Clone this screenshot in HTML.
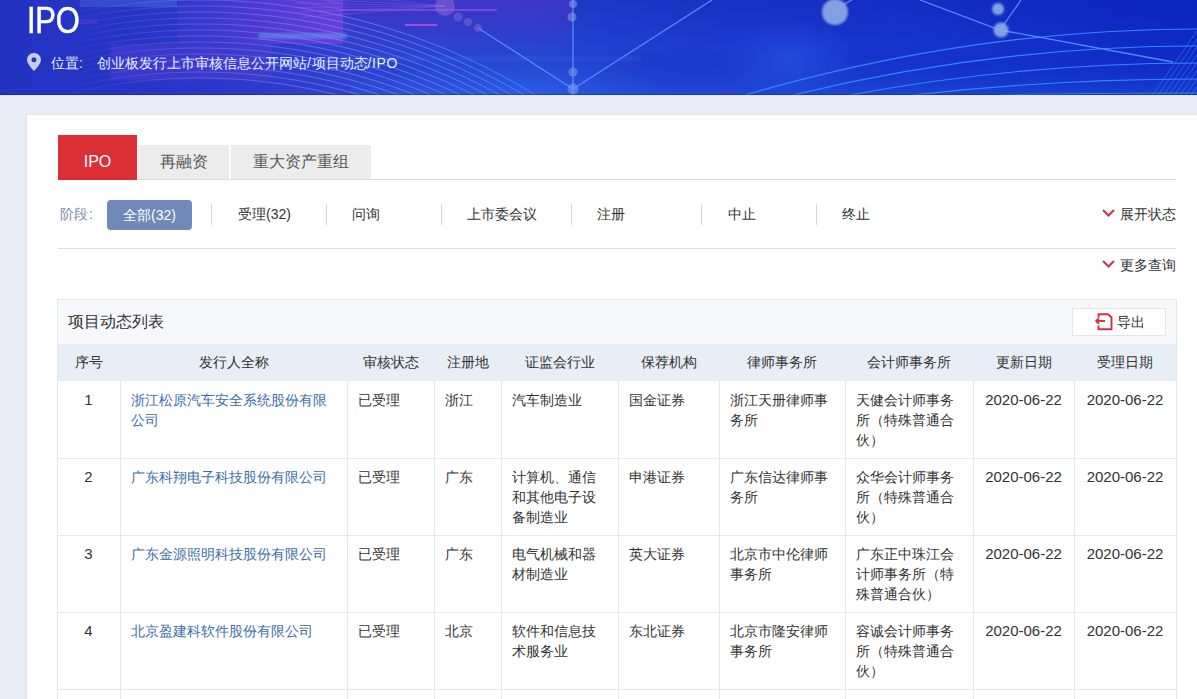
<!DOCTYPE html>
<html><head><meta charset="utf-8">
<style>
*{margin:0;padding:0;box-sizing:border-box}
html,body{width:1197px;height:699px;overflow:hidden;background:#e9ecf4;font-family:"Liberation Sans",sans-serif;color:#333;position:relative}
.a{position:absolute;white-space:nowrap}
.banner{position:absolute;left:0;top:0;width:1197px;height:95px;overflow:hidden;background:#2536cc}
.banner svg{position:absolute;left:0;top:0}
.ipo{position:absolute;left:27px;top:1px;color:#fff;font-size:36px;line-height:40px;transform:scaleX(0.86);transform-origin:0 0;letter-spacing:-0.3px;-webkit-text-stroke:0.5px #fff}
.loc{position:absolute;left:51px;top:54px;color:#e6eeff;font-size:14px;line-height:18px;white-space:nowrap}
.card{position:absolute;left:27px;top:115px;width:1180px;height:600px;background:#fff;box-shadow:0 0 3px rgba(0,0,0,0.07)}
.tab{position:absolute;top:145px;height:34px;background:#ececec;color:#585858;font-size:16px;line-height:34px;text-align:center}
.tabred{position:absolute;left:58px;top:135px;width:79px;height:45px;background:#dc2f35;color:#fff;font-size:16px;line-height:54px;text-align:center}
.hline{position:absolute;left:58px;width:1118px;height:1px;background:#dcdcdc}
.stage{position:absolute;top:205px;font-size:14px;line-height:18px;color:#333;white-space:nowrap}
.sep{position:absolute;top:204px;width:1px;height:21px;background:#d8d8d8}
.btn{position:absolute;left:107px;top:200px;width:85px;height:30px;border-radius:4px;background:#7089b8;color:#fff;font-size:14px;line-height:30px;text-align:center}
.ttl{position:absolute;left:57px;top:299px;width:1120px;height:45px;border-top:1px solid #e6e8ec;background:#f6f8fb}
.ttltxt{left:68px;top:312px;font-size:16px;line-height:20px;color:#333}
.exp{position:absolute;left:1072px;top:308px;width:94px;height:28px;background:#fff;border:1px solid #e4e4e4}
.hdr{position:absolute;left:57px;top:344px;width:1120px;height:37px;background:#e7eef6}
.th{top:344px;height:37px;line-height:37px;text-align:center;font-size:14px;color:#333}
.hl{position:absolute;left:57px;width:1120px;height:1px;background:#e8e8e8}
.vl{position:absolute;width:1px;background:#e8e8e8}
.td{font-size:14px;line-height:20px;color:#333}
.td.c{text-align:center;font-size:15px}
.lnk{color:#3b6ea8}

</style></head><body>
<div class="banner">
<svg width="1197" height="95" viewBox="0 0 1197 95"><defs><linearGradient id="bg" x1="0" y1="0" x2="1197" y2="0" gradientUnits="userSpaceOnUse"><stop offset="0" stop-color="#2233c2"/><stop offset="0.1" stop-color="#2634c6"/><stop offset="0.2" stop-color="#2e38ca"/><stop offset="0.28" stop-color="#3240ce"/><stop offset="0.36" stop-color="#2c44d2"/><stop offset="0.46" stop-color="#2444d2"/><stop offset="0.56" stop-color="#1e3cce"/><stop offset="0.75" stop-color="#1634cc"/><stop offset="1" stop-color="#0e2ac4"/></linearGradient><linearGradient id="vg" x1="0" y1="0" x2="0" y2="95" gradientUnits="userSpaceOnUse"><stop offset="0" stop-color="#0a1aa0" stop-opacity="0.25"/><stop offset="0.5" stop-color="#0a1aa0" stop-opacity="0"/><stop offset="1" stop-color="#2a6af0" stop-opacity="0.3"/></linearGradient><linearGradient id="pur" x1="0" y1="0" x2="1" y2="0"><stop offset="0" stop-color="#6a3cd8" stop-opacity="0.15"/><stop offset="0.5" stop-color="#7038d8" stop-opacity="0.5"/><stop offset="1" stop-color="#7a3cdc" stop-opacity="0.8"/></linearGradient><radialGradient id="glow"><stop offset="0" stop-color="#3a78f8" stop-opacity="0.5"/><stop offset="1" stop-color="#3a78f8" stop-opacity="0"/></radialGradient><linearGradient id="lg" x1="60" y1="0" x2="560" y2="0" gradientUnits="userSpaceOnUse"><stop offset="0" stop-color="#7a9af8" stop-opacity="0"/><stop offset="0.25" stop-color="#7a9af8" stop-opacity="0.45"/><stop offset="0.6" stop-color="#6a9cff" stop-opacity="0.8"/><stop offset="1" stop-color="#4a90ff" stop-opacity="1"/></linearGradient><filter id="bl"><feGaussianBlur stdDeviation="1.2"/></filter><filter id="bl2"><feGaussianBlur stdDeviation="0.7"/></filter></defs><rect width="1197" height="95" fill="url(#bg)"/><rect x="350" width="847" height="95" fill="url(#vg)"/><ellipse cx="520" cy="90" rx="140" ry="40" fill="url(#glow)" opacity="0.6"/><ellipse cx="790" cy="60" rx="70" ry="40" fill="url(#glow)" opacity="0.55"/><linearGradient id="vio" x1="0" y1="0" x2="0" y2="1"><stop offset="0" stop-color="#4a34c8" stop-opacity="0.7"/><stop offset="1" stop-color="#4a34c8" stop-opacity="0"/></linearGradient><rect x="343" y="0" width="230" height="55" fill="url(#vio)"/><rect x="178" y="0" width="165" height="44" fill="url(#pur)"/><rect x="110" y="44" width="162" height="36" fill="#7040d8" opacity="0.28" filter="url(#bl)"/><rect x="80" y="0" width="97" height="7" fill="#4a6ae0" opacity="0.45"/><rect x="80" y="19" width="17" height="5" fill="#7a40d8" opacity="0.3"/><rect x="258" y="33" width="89" height="6" rx="3" fill="#6aa0f0" opacity="0.5" filter="url(#bl)"/><rect x="340" y="56" width="300" height="5" fill="#4a80f0" opacity="0.15" filter="url(#bl)"/><g fill="none" stroke="#9a7ae8" stroke-opacity="0.25" stroke-width="1"><path d="M445,6 L297.3,-1.8"/><path d="M445,6 L295.4,2.9"/><path d="M445,6 L295.1,7.6"/><path d="M445,6 L296.5,12.3"/><path d="M445,6 L300.1,17.6"/><path d="M445,6 L304.0,-9.4"/></g><rect x="340" y="9" width="157" height="2" fill="#9050e0" opacity="0.7"/><rect x="405" y="24" width="32" height="2" fill="#c050e0" opacity="0.8"/><g fill="none" stroke="url(#lg)" stroke-width="1"><path d="M60.0,-2.9 L70.0,-5.0 L80.0,-7.0 L90.0,-8.7 L100.0,-10.4 L110.0,-11.8 L120.0,-13.1 L130.0,-14.3 L140.0,-15.3 L150.0,-16.1 L160.0,-16.8 L170.0,-17.3 L180.0,-17.7 L190.0,-17.9 L200.0,-18.0 L210.0,-17.9 L220.0,-17.7 L230.0,-17.3 L240.0,-16.8 L250.0,-16.1 L260.0,-15.3 L270.0,-14.3 L280.0,-13.1 L290.0,-11.8 L300.0,-10.4 L310.0,-8.7 L320.0,-7.0 L330.0,-5.0 L340.0,-2.9" stroke-opacity="0.35"/><path d="M60.0,3.2 L70.0,1.1 L80.0,-0.9 L90.0,-2.7 L100.0,-4.3 L110.0,-5.8 L120.0,-7.1 L130.0,-8.2 L140.0,-9.2 L150.0,-10.1 L160.0,-10.8 L170.0,-11.3 L180.0,-11.7 L190.0,-11.9 L200.0,-12.0 L210.0,-11.9 L220.0,-11.7 L230.0,-11.3 L240.0,-10.8 L250.0,-10.1 L260.0,-9.2 L270.0,-8.2 L280.0,-7.1 L290.0,-5.8 L300.0,-4.3 L310.0,-2.7 L320.0,-0.9 L330.0,1.1 L340.0,3.2" stroke-opacity="0.35"/><path d="M60.0,9.4 L70.0,7.2 L80.0,5.2 L90.0,3.4 L100.0,1.8 L110.0,0.3 L120.0,-1.0 L130.0,-2.2 L140.0,-3.2 L150.0,-4.1 L160.0,-4.8 L170.0,-5.3 L180.0,-5.7 L190.0,-5.9 L200.0,-6.0 L210.0,-5.9 L220.0,-5.7 L230.0,-5.3 L240.0,-4.8 L250.0,-4.1 L260.0,-3.2 L270.0,-2.2 L280.0,-1.0 L290.0,0.3 L300.0,1.8 L310.0,3.4 L320.0,5.2 L330.0,7.2 L340.0,9.4" stroke-opacity="0.35"/><path d="M60.0,15.5 L70.0,13.3 L80.0,11.4 L90.0,9.5 L100.0,7.9 L110.0,6.4 L120.0,5.0 L130.0,3.8 L140.0,2.8 L150.0,2.0 L160.0,1.3 L170.0,0.7 L180.0,0.3 L190.0,0.1 L200.0,0.0 L210.0,0.1 L220.0,0.3 L230.0,0.7 L240.0,1.3 L250.0,2.0 L260.0,2.8 L270.0,3.8 L280.0,5.0 L290.0,6.4 L300.0,7.9 L310.0,9.5 L320.0,11.4 L330.0,13.3 L340.0,15.5 L350.0,17.8 L360.0,20.3 L370.0,23.0 L380.0,25.8 L390.0,28.9 L400.0,32.1 L410.0,35.4 L420.0,39.0 L430.0,42.8 L440.0,46.7 L450.0,50.8 L460.0,55.2 L470.0,59.7 L480.0,64.5 L490.0,69.5 L500.0,74.7 L510.0,80.1 L520.0,85.7 L530.0,91.6 L540.0,97.8 L550.0,104.2" stroke-opacity="0.75"/><path d="M60.0,21.7 L70.0,19.5 L80.0,17.5 L90.0,15.6 L100.0,13.9 L110.0,12.4 L120.0,11.1 L130.0,9.9 L140.0,8.8 L150.0,8.0 L160.0,7.3 L170.0,6.7 L180.0,6.3 L190.0,6.1 L200.0,6.0 L210.0,6.1 L220.0,6.3 L230.0,6.7 L240.0,7.3 L250.0,8.0 L260.0,8.8 L270.0,9.9 L280.0,11.1 L290.0,12.4 L300.0,13.9 L310.0,15.6 L320.0,17.5 L330.0,19.5 L340.0,21.7 L350.0,24.0 L360.0,26.5 L370.0,29.2 L380.0,32.1 L390.0,35.1 L400.0,38.4 L410.0,41.8 L420.0,45.4 L430.0,49.2 L440.0,53.2 L450.0,57.4 L460.0,61.8 L470.0,66.4 L480.0,71.2 L490.0,76.2 L500.0,81.5 L510.0,87.0 L520.0,92.7 L530.0,98.7" stroke-opacity="0.75"/><path d="M60.0,27.8 L70.0,25.6 L80.0,23.6 L90.0,21.7 L100.0,20.0 L110.0,18.5 L120.0,17.1 L130.0,15.9 L140.0,14.9 L150.0,14.0 L160.0,13.3 L170.0,12.7 L180.0,12.3 L190.0,12.1 L200.0,12.0 L210.0,12.1 L220.0,12.3 L230.0,12.7 L240.0,13.3 L250.0,14.0 L260.0,14.9 L270.0,15.9 L280.0,17.1 L290.0,18.5 L300.0,20.0 L310.0,21.7 L320.0,23.6 L330.0,25.6 L340.0,27.8 L350.0,30.2 L360.0,32.7 L370.0,35.4 L380.0,38.3 L390.0,41.4 L400.0,44.7 L410.0,48.2 L420.0,51.8 L430.0,55.6 L440.0,59.7 L450.0,63.9 L460.0,68.3 L470.0,73.0 L480.0,77.9 L490.0,83.0 L500.0,88.3 L510.0,93.8 L520.0,99.6" stroke-opacity="0.75"/><path d="M60.0,34.0 L70.0,31.7 L80.0,29.7 L90.0,27.8 L100.0,26.1 L110.0,24.5 L120.0,23.2 L130.0,22.0 L140.0,20.9 L150.0,20.0 L160.0,19.3 L170.0,18.7 L180.0,18.3 L190.0,18.1 L200.0,18.0 L210.0,18.1 L220.0,18.3 L230.0,18.7 L240.0,19.3 L250.0,20.0 L260.0,20.9 L270.0,22.0 L280.0,23.2 L290.0,24.5 L300.0,26.1 L310.0,27.8 L320.0,29.7 L330.0,31.7 L340.0,34.0 L350.0,36.4 L360.0,38.9 L370.0,41.7 L380.0,44.6 L390.0,47.7 L400.0,51.0 L410.0,54.5 L420.0,58.2 L430.0,62.1 L440.0,66.2 L450.0,70.5 L460.0,74.9 L470.0,79.7 L480.0,84.6 L490.0,89.7 L500.0,95.1 L510.0,100.8" stroke-opacity="0.75"/><path d="M60.0,40.1 L70.0,37.9 L80.0,35.8 L90.0,33.9 L100.0,32.2 L110.0,30.6 L120.0,29.2 L130.0,28.0 L140.0,26.9 L150.0,26.0 L160.0,25.3 L170.0,24.7 L180.0,24.3 L190.0,24.1 L200.0,24.0 L210.0,24.1 L220.0,24.3 L230.0,24.7 L240.0,25.3 L250.0,26.0 L260.0,26.9 L270.0,28.0 L280.0,29.2 L290.0,30.6 L300.0,32.2 L310.0,33.9 L320.0,35.8 L330.0,37.9 L340.0,40.1 L350.0,42.5 L360.0,45.1 L370.0,47.9 L380.0,50.9 L390.0,54.0 L400.0,57.4 L410.0,60.9 L420.0,64.6 L430.0,68.5 L440.0,72.7 L450.0,77.0 L460.0,81.6 L470.0,86.3 L480.0,91.3 L490.0,96.5 L500.0,102.0" stroke-opacity="0.75"/><path d="M60.0,46.3 L70.0,44.0 L80.0,41.9 L90.0,40.0 L100.0,38.3 L110.0,36.7 L120.0,35.3 L130.0,34.0 L140.0,33.0 L150.0,32.1 L160.0,31.3 L170.0,30.7 L180.0,30.3 L190.0,30.1 L200.0,30.0 L210.0,30.1 L220.0,30.3 L230.0,30.7 L240.0,31.3 L250.0,32.1 L260.0,33.0 L270.0,34.0 L280.0,35.3 L290.0,36.7 L300.0,38.3 L310.0,40.0 L320.0,41.9 L330.0,44.0 L340.0,46.3 L350.0,48.7 L360.0,51.4 L370.0,54.2 L380.0,57.2 L390.0,60.3 L400.0,63.7 L410.0,67.3 L420.0,71.1 L430.0,75.0 L440.0,79.2 L450.0,83.6 L460.0,88.2 L470.0,93.0 L480.0,98.1" stroke-opacity="0.75"/><path d="M60.0,52.4 L70.0,50.2 L80.0,48.0 L90.0,46.1 L100.0,44.3 L110.0,42.7 L120.0,41.3 L130.0,40.1 L140.0,39.0 L150.0,38.1 L160.0,37.3 L170.0,36.7 L180.0,36.3 L190.0,36.1 L200.0,36.0 L210.0,36.1 L220.0,36.3 L230.0,36.7 L240.0,37.3 L250.0,38.1 L260.0,39.0 L270.0,40.1 L280.0,41.3 L290.0,42.7 L300.0,44.3 L310.0,46.1 L320.0,48.0 L330.0,50.2 L340.0,52.4 L350.0,54.9 L360.0,57.6 L370.0,60.4 L380.0,63.4 L390.0,66.7 L400.0,70.1 L410.0,73.7 L420.0,77.5 L430.0,81.5 L440.0,85.7 L450.0,90.2 L460.0,94.8 L470.0,99.7" stroke-opacity="0.75"/><path d="M60.0,58.6 L70.0,56.3 L80.0,54.2 L90.0,52.2 L100.0,50.4 L110.0,48.8 L120.0,47.4 L130.0,46.1 L140.0,45.0 L150.0,44.1 L160.0,43.3 L170.0,42.8 L180.0,42.3 L190.0,42.1 L200.0,42.0 L210.0,42.1 L220.0,42.3 L230.0,42.8 L240.0,43.3 L250.0,44.1 L260.0,45.0 L270.0,46.1 L280.0,47.4 L290.0,48.8 L300.0,50.4 L310.0,52.2 L320.0,54.2 L330.0,56.3 L340.0,58.6 L350.0,61.1 L360.0,63.8 L370.0,66.7 L380.0,69.7 L390.0,73.0 L400.0,76.4 L410.0,80.1 L420.0,83.9 L430.0,88.0 L440.0,92.3 L450.0,96.8 L460.0,101.5" stroke-opacity="0.75"/><path d="M60.0,64.8 L70.0,62.5 L80.0,60.3 L90.0,58.3 L100.0,56.5 L110.0,54.9 L120.0,53.4 L130.0,52.2 L140.0,51.0 L150.0,50.1 L160.0,49.4 L170.0,48.8 L180.0,48.3 L190.0,48.1 L200.0,48.0 L210.0,48.1 L220.0,48.3 L230.0,48.8 L240.0,49.4 L250.0,50.1 L260.0,51.0 L270.0,52.2 L280.0,53.4 L290.0,54.9 L300.0,56.5 L310.0,58.3 L320.0,60.3 L330.0,62.5 L340.0,64.8 L350.0,67.3 L360.0,70.0 L370.0,72.9 L380.0,76.0 L390.0,79.3 L400.0,82.8 L410.0,86.5 L420.0,90.4 L430.0,94.5 L440.0,98.8" stroke-opacity="0.75"/><path d="M60.0,71.0 L70.0,68.6 L80.0,66.4 L90.0,64.4 L100.0,62.6 L110.0,61.0 L120.0,59.5 L130.0,58.2 L140.0,57.1 L150.0,56.1 L160.0,55.4 L170.0,54.8 L180.0,54.3 L190.0,54.1 L200.0,54.0 L210.0,54.1 L220.0,54.3 L230.0,54.8 L240.0,55.4 L250.0,56.1 L260.0,57.1 L270.0,58.2 L280.0,59.5 L290.0,61.0 L300.0,62.6 L310.0,64.4 L320.0,66.4 L330.0,68.6 L340.0,71.0 L350.0,73.5 L360.0,76.3 L370.0,79.2 L380.0,82.3 L390.0,85.7 L400.0,89.2 L410.0,92.9 L420.0,96.9 L430.0,101.0" stroke-opacity="0.75"/><path d="M60.0,77.2 L70.0,74.8 L80.0,72.5 L90.0,70.5 L100.0,68.7 L110.0,67.0 L120.0,65.5 L130.0,64.2 L140.0,63.1 L150.0,62.2 L160.0,61.4 L170.0,60.8 L180.0,60.3 L190.0,60.1 L200.0,60.0 L210.0,60.1 L220.0,60.3 L230.0,60.8 L240.0,61.4 L250.0,62.2 L260.0,63.1 L270.0,64.2 L280.0,65.5 L290.0,67.0 L300.0,68.7 L310.0,70.5 L320.0,72.5 L330.0,74.8 L340.0,77.2 L350.0,79.7 L360.0,82.5 L370.0,85.5 L380.0,88.6 L390.0,92.0 L400.0,95.6 L410.0,99.4" stroke-opacity="0.75"/><path d="M60.0,83.3 L70.0,80.9 L80.0,78.7 L90.0,76.6 L100.0,74.8 L110.0,73.1 L120.0,71.6 L130.0,70.3 L140.0,69.1 L150.0,68.2 L160.0,67.4 L170.0,66.8 L180.0,66.3 L190.0,66.1 L200.0,66.0 L210.0,66.1 L220.0,66.3 L230.0,66.8 L240.0,67.4 L250.0,68.2 L260.0,69.1 L270.0,70.3 L280.0,71.6 L290.0,73.1 L300.0,74.8 L310.0,76.6 L320.0,78.7 L330.0,80.9 L340.0,83.3 L350.0,85.9 L360.0,88.8 L370.0,91.8 L380.0,95.0 L390.0,98.4" stroke-opacity="0.75"/><path d="M60.0,89.5 L70.0,87.1 L80.0,84.8 L90.0,82.8 L100.0,80.9 L110.0,79.2 L120.0,77.7 L130.0,76.3 L140.0,75.2 L150.0,74.2 L160.0,73.4 L170.0,72.8 L180.0,72.4 L190.0,72.1 L200.0,72.0 L210.0,72.1 L220.0,72.4 L230.0,72.8 L240.0,73.4 L250.0,74.2 L260.0,75.2 L270.0,76.3 L280.0,77.7 L290.0,79.2 L300.0,80.9 L310.0,82.8 L320.0,84.8 L330.0,87.1 L340.0,89.5 L350.0,92.2 L360.0,95.0 L370.0,98.0" stroke-opacity="0.75"/><path d="M60.0,95.7 L70.0,93.2 L80.0,91.0 L90.0,88.9 L100.0,87.0 L110.0,85.3 L120.0,83.7 L130.0,82.4 L140.0,81.2 L150.0,80.2 L160.0,79.4 L170.0,78.8 L180.0,78.4 L190.0,78.1 L200.0,78.0 L210.0,78.1 L220.0,78.4 L230.0,78.8 L240.0,79.4 L250.0,80.2 L260.0,81.2 L270.0,82.4 L280.0,83.7 L290.0,85.3 L300.0,87.0 L310.0,88.9 L320.0,91.0 L330.0,93.2 L340.0,95.7 L350.0,98.4" stroke-opacity="0.75"/><path d="M60.0,101.9" stroke-opacity="0.75"/><path d="M60.0,108.1" stroke-opacity="0.75"/><path d="M60.0,114.3" stroke-opacity="0.75"/></g><g fill="none" stroke="#3d8cff" stroke-opacity="0.9" stroke-width="1.2"><path d="M745,95 Q971.0,29 1197,29" /><path d="M793,95 Q995.0,46 1197,46" /><path d="M850,95 Q1023.5,63 1197,63" /><path d="M913,95 Q1055.0,79 1197,79" /><path d="M1000,95 Q1098.5,93 1197,93" /></g><g fill="none" stroke="#3a8aff" stroke-opacity="0.6" stroke-width="0.9"><path d="M1152.0,96 L1200.4,26"/><path d="M1157.5,96 L1205.9,26"/><path d="M1163.0,96 L1211.4,26"/><path d="M1168.5,96 L1216.9,26"/><path d="M1174.0,96 L1222.4,26"/><path d="M1179.5,96 L1227.9,26"/><path d="M1185.0,96 L1233.4,26"/><path d="M1190.5,96 L1238.9,26"/><path d="M1196.0,96 L1244.4,26"/></g><g fill="none" stroke="#5e8cff" stroke-opacity="0.95" stroke-width="1.3"><path d="M573,0V95"/><path d="M478,28L573,89L712,0"/><path d="M843,5L855,-2"/><path d="M920,0L1000,30L1173,62"/><path d="M1000,30L1021,0"/></g><g fill="#7c98e8" fill-opacity="0.6" filter="url(#bl2)"><circle cx="573" cy="4" r="4"/><circle cx="572" cy="17" r="4.5"/><circle cx="573" cy="72" r="4.5"/><circle cx="573" cy="89" r="5.5"/></g><g fill="#90ace8" fill-opacity="0.9" filter="url(#bl)"><circle cx="835" cy="12" r="13"/><circle cx="998" cy="9" r="6"/><circle cx="1001" cy="30" r="7.5"/></g><g fill="#a070d8" fill-opacity="0.45" filter="url(#bl2)"><circle cx="445" cy="6" r="10"/></g><g fill="#8070d0" fill-opacity="0.45" filter="url(#bl2)"><circle cx="458" cy="17" r="4.5"/><circle cx="468" cy="22" r="4"/><circle cx="478" cy="28" r="4"/></g><rect y="94" width="1197" height="1" fill="#0a1880" opacity="0.35"/></svg>
<div class="ipo">IPO</div>
<svg style="left:27px;top:53px" width="14" height="18" viewBox="0 0 14 18"><path d="M7 0C3.1 0 0 3 0 6.8 0 11.5 7 18 7 18S14 11.5 14 6.8C14 3 10.9 0 7 0zM7 9.3A2.5 2.5 0 1 1 7 4.3 2.5 2.5 0 0 1 7 9.3z" fill="#c9cde2"/></svg>
<div class="loc">位置:</div><div class="loc" style="left:97px">创业板发行上市审核信息公开网站<span style="letter-spacing:0.6px">/</span>项目动态<span style="letter-spacing:0.6px">/IPO</span></div>
</div>
<div class="card"></div>
<div class="hline" style="top:179px"></div>
<div class="tabred">IPO</div>
<div class="tab" style="left:138px;width:91px">再融资</div>
<div class="tab" style="left:231px;width:140px">重大资产重组</div>
<div class="stage" style="left:60px;color:#7b8ab2">阶段<span style="margin-left:1px">:</span></div>
<div class="btn">全部(32)</div>
<div class="sep" style="left:211px"></div>
<div class="stage" style="left:238px">受理(32)</div>
<div class="sep" style="left:326px"></div>
<div class="stage" style="left:352px">问询</div>
<div class="sep" style="left:441px"></div>
<div class="stage" style="left:467px">上市委会议</div>
<div class="sep" style="left:571px"></div>
<div class="stage" style="left:597px">注册</div>
<div class="sep" style="left:701px"></div>
<div class="stage" style="left:728px">中止</div>
<div class="sep" style="left:816px"></div>
<div class="stage" style="left:842px">终止</div>
<svg class="a" style="left:1102px;top:209px" width="13" height="8" viewBox="0 0 13 8"><path d="M1 1L6.5 6.5 12 1" fill="none" stroke="#c43848" stroke-width="2"/></svg>
<div class="stage" style="left:1120px;top:205px">展开状态</div>
<div class="hline" style="top:248px"></div>
<svg class="a" style="left:1102px;top:260px" width="13" height="8" viewBox="0 0 13 8"><path d="M1 1L6.5 6.5 12 1" fill="none" stroke="#c43848" stroke-width="2"/></svg>
<div class="stage" style="left:1120px;top:256px">更多查询</div>

<div class="tbl"><div class="ttl"></div><div class="a ttltxt">项目动态列表</div><div class="exp"><svg width="18" height="18" viewBox="0 0 18 18" style="position:absolute;left:22px;top:4px"><path d="M3.5,4.5V1.2H13L16.5,4.2V16.2H3.5V12.5" fill="none" stroke="#d22f3d" stroke-width="1.9" stroke-linejoin="round"/><path d="M1.2,8H10" fill="none" stroke="#d22f3d" stroke-width="1.9"/><path d="M4,5.2L1.2,8 4,10.8" fill="none" stroke="#d22f3d" stroke-width="1.9" stroke-linejoin="round"/></svg><span class="a" style="left:44px;top:4px;font-size:14px;line-height:18px;color:#333">导出</span></div><div class="hdr"></div><div class="a th" style="left:57px;width:63px">序号</div><div class="a th" style="left:120px;width:227px">发行人全称</div><div class="a th" style="left:347px;width:87px">审核状态</div><div class="a th" style="left:434px;width:67px">注册地</div><div class="a th" style="left:501px;width:117px">证监会行业</div><div class="a th" style="left:618px;width:101px">保荐机构</div><div class="a th" style="left:719px;width:126px">律师事务所</div><div class="a th" style="left:845px;width:128px">会计师事务所</div><div class="a th" style="left:973px;width:101px">更新日期</div><div class="a th" style="left:1074px;width:102px">受理日期</div><div class="hl" style="top:458px"></div><div class="hl" style="top:535px"></div><div class="hl" style="top:612px"></div><div class="hl" style="top:689px"></div><div class="vl" style="left:57px;top:299px;height:400px"></div><div class="vl" style="left:120px;top:381px;height:318px"></div><div class="vl" style="left:347px;top:381px;height:318px"></div><div class="vl" style="left:434px;top:381px;height:318px"></div><div class="vl" style="left:501px;top:381px;height:318px"></div><div class="vl" style="left:618px;top:381px;height:318px"></div><div class="vl" style="left:719px;top:381px;height:318px"></div><div class="vl" style="left:845px;top:381px;height:318px"></div><div class="vl" style="left:973px;top:381px;height:318px"></div><div class="vl" style="left:1074px;top:381px;height:318px"></div><div class="vl" style="left:1176px;top:299px;height:400px"></div><div class="a td c" style="left:57px;width:63px;top:390px">1</div><div class="a td lnk" style="left:131px;top:390px">浙江松原汽车安全系统股份有限<br>公司</div><div class="a td" style="left:358px;top:390px">已受理</div><div class="a td" style="left:445px;top:390px">浙江</div><div class="a td" style="left:512px;top:390px">汽车制造业</div><div class="a td" style="left:629px;top:390px">国金证券</div><div class="a td" style="left:730px;top:390px">浙江天册律师事<br>务所</div><div class="a td" style="left:856px;top:390px">天健会计师事务<br>所（特殊普通合<br>伙）</div><div class="a td c" style="left:973px;width:101px;top:390px">2020-06-22</div><div class="a td c" style="left:1074px;width:102px;top:390px">2020-06-22</div><div class="a td c" style="left:57px;width:63px;top:467px">2</div><div class="a td lnk" style="left:131px;top:467px">广东科翔电子科技股份有限公司</div><div class="a td" style="left:358px;top:467px">已受理</div><div class="a td" style="left:445px;top:467px">广东</div><div class="a td" style="left:512px;top:467px">计算机、通信<br>和其他电子设<br>备制造业</div><div class="a td" style="left:629px;top:467px">申港证券</div><div class="a td" style="left:730px;top:467px">广东信达律师事<br>务所</div><div class="a td" style="left:856px;top:467px">众华会计师事务<br>所（特殊普通合<br>伙）</div><div class="a td c" style="left:973px;width:101px;top:467px">2020-06-22</div><div class="a td c" style="left:1074px;width:102px;top:467px">2020-06-22</div><div class="a td c" style="left:57px;width:63px;top:544px">3</div><div class="a td lnk" style="left:131px;top:544px">广东金源照明科技股份有限公司</div><div class="a td" style="left:358px;top:544px">已受理</div><div class="a td" style="left:445px;top:544px">广东</div><div class="a td" style="left:512px;top:544px">电气机械和器<br>材制造业</div><div class="a td" style="left:629px;top:544px">英大证券</div><div class="a td" style="left:730px;top:544px">北京市中伦律师<br>事务所</div><div class="a td" style="left:856px;top:544px">广东正中珠江会<br>计师事务所（特<br>殊普通合伙）</div><div class="a td c" style="left:973px;width:101px;top:544px">2020-06-22</div><div class="a td c" style="left:1074px;width:102px;top:544px">2020-06-22</div><div class="a td c" style="left:57px;width:63px;top:621px">4</div><div class="a td lnk" style="left:131px;top:621px">北京盈建科软件股份有限公司</div><div class="a td" style="left:358px;top:621px">已受理</div><div class="a td" style="left:445px;top:621px">北京</div><div class="a td" style="left:512px;top:621px">软件和信息技<br>术服务业</div><div class="a td" style="left:629px;top:621px">东北证券</div><div class="a td" style="left:730px;top:621px">北京市隆安律师<br>事务所</div><div class="a td" style="left:856px;top:621px">容诚会计师事务<br>所（特殊普通合<br>伙）</div><div class="a td c" style="left:973px;width:101px;top:621px">2020-06-22</div><div class="a td c" style="left:1074px;width:102px;top:621px">2020-06-22</div></div>
</body></html>
